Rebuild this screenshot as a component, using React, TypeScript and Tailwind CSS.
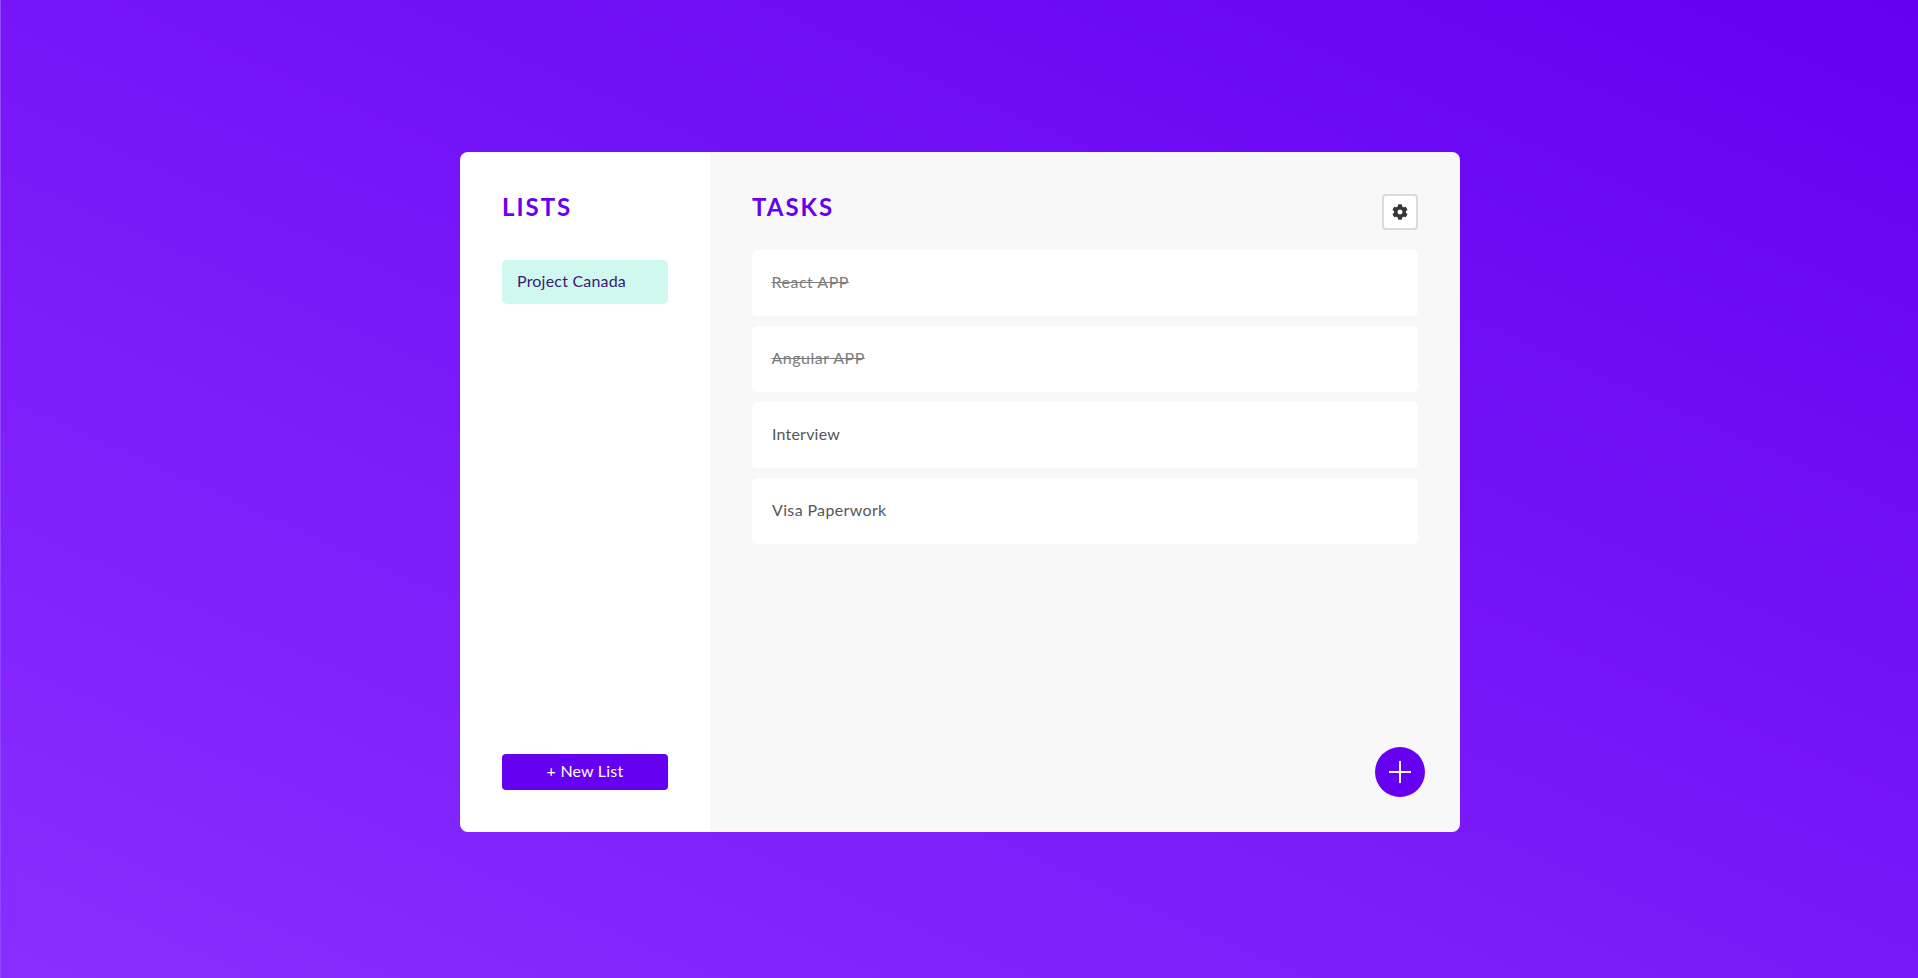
const lists = ["Project Canada"];

const tasks = [
  { title: "React APP", done: true, spacing: "tracking-[0.5px]" },
  { title: "Angular APP", done: true, spacing: "tracking-[0.5px]" },
  { title: "Interview", done: false, spacing: "tracking-[0.2px]" },
  { title: "Visa Paperwork", done: false, spacing: "tracking-[0.35px]" },
];

function Gear() {
  return (
    <svg viewBox="0 0 512 512" className="h-4 w-4" fill="#363636">
      <path d="M487.4 315.7l-42.6-24.6c4.3-23.2 4.3-47 0-70.2l42.6-24.6c4.9-2.8 7.1-8.6 5.5-14-11.1-35.6-30-67.8-54.7-94.6-3.8-4.1-10-5.1-14.8-2.3L380.8 110c-17.9-15.4-38.5-27.3-60.8-35.1V25.8c0-5.6-3.9-10.5-9.4-11.7-36.7-8.2-74.3-7.8-109.2 0-5.5 1.2-9.4 6.1-9.4 11.7V75c-22.2 7.9-42.8 19.8-60.8 35.1L88.7 85.5c-4.9-2.8-11-1.9-14.8 2.3-24.7 26.7-43.6 58.9-54.7 94.6-1.7 5.4.6 11.2 5.5 14L67.3 221c-4.3 23.2-4.3 47 0 70.2l-42.6 24.6c-4.9 2.8-7.1 8.6-5.5 14 11.1 35.6 30 67.8 54.7 94.6 3.8 4.1 10 5.1 14.8 2.3l42.6-24.6c17.9 15.4 38.5 27.3 60.8 35.1v49.2c0 5.6 3.9 10.5 9.4 11.7 36.7 8.2 74.3 7.8 109.2 0 5.5-1.2 9.4-6.1 9.4-11.7v-49.2c22.2-7.9 42.8-19.8 60.8-35.1l42.6 24.6c4.9 2.8 11 1.9 14.8-2.3 24.7-26.7 43.6-58.9 54.7-94.6 1.5-5.5-.7-11.3-5.6-14.1zM256 336c-44.1 0-80-35.9-80-80s35.9-80 80-80 80 35.9 80 80-35.9 80-80 80z" />
    </svg>
  );
}

function Sidebar() {
  return (
    <aside className="flex w-[250px] flex-col bg-white p-[42px]">
      <h2 className="h-7 pl-[0.5px] text-2xl leading-[26px] font-bold tracking-[2px] text-[#6500f0]">LISTS</h2>
      <ul className="mt-[38px] flex-1">
        {lists.map((name) => (
          <li
            key={name}
            className="flex h-11 items-center rounded-[5px] bg-[#cff8ef] pb-0.5 pl-[15.5px] text-base tracking-[0.2px] text-[#3a1874]"
          >
            {name}
          </li>
        ))}
      </ul>
      <button className="h-9 rounded-[4px] bg-[#6500f0] pb-0.5 pl-px text-base tracking-[0.2px] text-white">
        + New List
      </button>
    </aside>
  );
}

function Tasks() {
  return (
    <main className="flex flex-1 flex-col bg-[#f8f8f8] p-[42px]">
      <header className="flex items-start justify-between">
        <h2 className="h-7 pl-[0.5px] text-2xl leading-[26px] font-bold tracking-[2px] text-[#6500f0]">TASKS</h2>
        <button
          aria-label="Settings"
          className="flex h-9 w-9 items-center justify-center rounded-[4px] border-2 border-[#dbdbdb] bg-white"
        >
          <Gear />
        </button>
      </header>
      <ul className="mt-5 flex flex-1 flex-col gap-2.5">
        {tasks.map((task) => (
          <li
            key={task.title}
            className="flex h-[66px] items-center rounded-[5px] bg-white px-5 pb-0.5 text-base"
          >
            <span
              className={`${task.spacing} ${
                task.done ? "text-[#7c7c7c] line-through" : "pl-[0.5px] text-[#565656]"
              }`}
            >
              {task.title}
            </span>
          </li>
        ))}
      </ul>
      <button
        aria-label="Add task"
        className="-mr-[7px] -mb-[7px] flex h-[50px] w-[50px] items-center justify-center self-end rounded-full bg-[#6500f0] text-white"
      >
        <svg viewBox="0 0 22 22" className="h-[22px] w-[22px]" stroke="currentColor" strokeWidth={2}>
          <path d="M11 0v22M0 11h22" />
        </svg>
      </button>
    </main>
  );
}

export default function App() {
  return (
    <div className="flex h-screen justify-center border-l border-[#9346ff] bg-[linear-gradient(24deg,#892dff,#6500f0)] pt-[152px] font-['Lato','Liberation_Sans',sans-serif]">
      <div className="flex h-[680px] w-[1000px] overflow-hidden rounded-lg">
        <Sidebar />
        <Tasks />
      </div>
    </div>
  );
}
